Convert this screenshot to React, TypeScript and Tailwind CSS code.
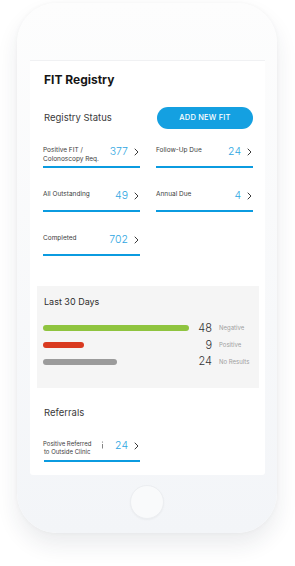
import React from "react";

function Chevron({ className = "" }: { className?: string }) {
  return (
    <svg width="5" height="8" viewBox="0 0 5 8" className={`shrink-0 ${className}`}>
      <path
        d="M1 1l3 3-3 3"
        fill="none"
        stroke="#3a3a3a"
        strokeWidth="1"
        strokeLinecap="round"
        strokeLinejoin="round"
      />
    </svg>
  );
}

function StatCard({ label, value }: { label: React.ReactNode; value: string }) {
  return (
    <div className="flex flex-col">
      <div className="flex h-[20px] items-start">
        <div className="flex-1 text-[6.5px] leading-[8.5px] text-[#3d3d3d]">{label}</div>
        <span className="text-[10.5px] leading-[11px] font-light text-[#2ea6e2]">{value}</span>
        <Chevron className="ml-[6px] mr-[1px] mt-[2px]" />
      </div>
      <div className="h-[2px] bg-[#0b9be0]" />
    </div>
  );
}

const results = [
  { width: 146, color: "bg-[#8fc43f]", value: "48", label: "Negative" },
  { width: 41, color: "bg-[#d93a20]", value: "9", label: "Positive" },
  { width: 74, color: "bg-[#9b9b9b]", value: "24", label: "No Results" },
];

export default function App() {
  return (
    <div className="min-h-[566px] bg-white pt-[3px] pl-[17px] font-[family-name:Inter,Roboto,sans-serif]">
      <div className="flex h-[530px] w-[260px] flex-col items-center rounded-[40px] bg-linear-to-b from-[#fdfdfd] to-[#f3f5f8] shadow-[0_12px_22px_rgba(30,45,70,0.09),0_0_5px_rgba(0,0,0,0.04)]">
        {/* Screen */}
        <div className="mt-[57px] ml-[1px] h-[415px] w-[235px] rounded-b-[3px] border-t border-[#f0f1f3] bg-white">
          <h1 className="pt-[13px] pl-[14px] text-[12px] leading-[12px] font-bold text-[#161616]">
            FIT Registry
          </h1>

          <div className="mt-[21px] flex items-center justify-between pl-[14px] pr-[12px]">
            <span className="text-[9.5px] leading-[10px] text-[#3a3a3a]">Registry Status</span>
            <button className="flex h-[22px] w-[96px] items-center justify-center rounded-full bg-[#14a0e1] text-[7.5px] font-medium tracking-[0.2px] text-white">
              ADD NEW FIT
            </button>
          </div>

          <div className="mt-[17px] grid grid-cols-2 gap-x-[16px] gap-y-[22px] pl-[13px] pr-[12px]">
            <StatCard
              label={
                <>
                  Positive FIT /
                  <br />
                  Colonoscopy Req.
                </>
              }
              value="377"
            />
            <StatCard label="Follow-Up Due" value="24" />
            <StatCard label="All Outstanding" value="49" />
            <StatCard label="Annual Due" value="4" />
            <StatCard label="Completed" value="702" />
          </div>

          {/* Last 30 days */}
          <div className="mt-[30px] ml-[7px] mr-[6px] h-[102px] bg-[#f5f5f5] pl-[6px] pt-[11px]">
            <div className="pl-[1px] text-[9px] leading-[10px] text-[#2e2e2e]">Last 30 Days</div>
            <div className="mt-[13px] flex flex-col">
              {results.map((r) => (
                <div key={r.label} className="flex h-[16.7px] items-center">
                  <div className="w-[146px]">
                    <div className={`h-[6px] rounded-full ${r.color}`} style={{ width: r.width }} />
                  </div>
                  <span className="w-[23px] text-right text-[11px] leading-[11px] font-light text-[#333]">
                    {r.value}
                  </span>
                  <span className="ml-[7px] text-[6px] leading-[6px] text-[#a0a0a0]">{r.label}</span>
                </div>
              ))}
            </div>
          </div>

          {/* Referrals */}
          <div className="mt-[20px] pl-[14px] text-[9.5px] leading-[10px] text-[#3a3a3a]">Referrals</div>
          <div className="mt-[22px] ml-[13px] flex w-[97px] flex-col">
            <div className="flex h-[20px] items-start">
              <div className="whitespace-nowrap text-center text-[6px] leading-[7.5px] text-[#3d3d3d]">
                Positive Referred
                <br />
                to Outside Clinic
              </div>
              <svg width="3" height="8" viewBox="0 0 3 8" className="ml-[10px] mt-[1px]">
                <circle cx="1.5" cy="1" r="0.6" fill="#666" />
                <path d="M1.5 3v4.5" stroke="#666" strokeWidth="0.8" />
              </svg>
              <span className="ml-auto text-[10.5px] leading-[11px] font-light text-[#2ea6e2]">24</span>
              <Chevron className="ml-[6px] mr-[1px] mt-[2px]" />
            </div>
            <div className="ml-[1px] h-[2px] bg-[#0b9be0]" />
          </div>
        </div>

        {/* Home button */}
        <div className="mt-[10px] h-[34px] w-[34px] rounded-full border border-[#eceef1] bg-[#f9fafb] shadow-[0_1px_2px_rgba(0,0,0,0.04)]" />
      </div>
    </div>
  );
}
